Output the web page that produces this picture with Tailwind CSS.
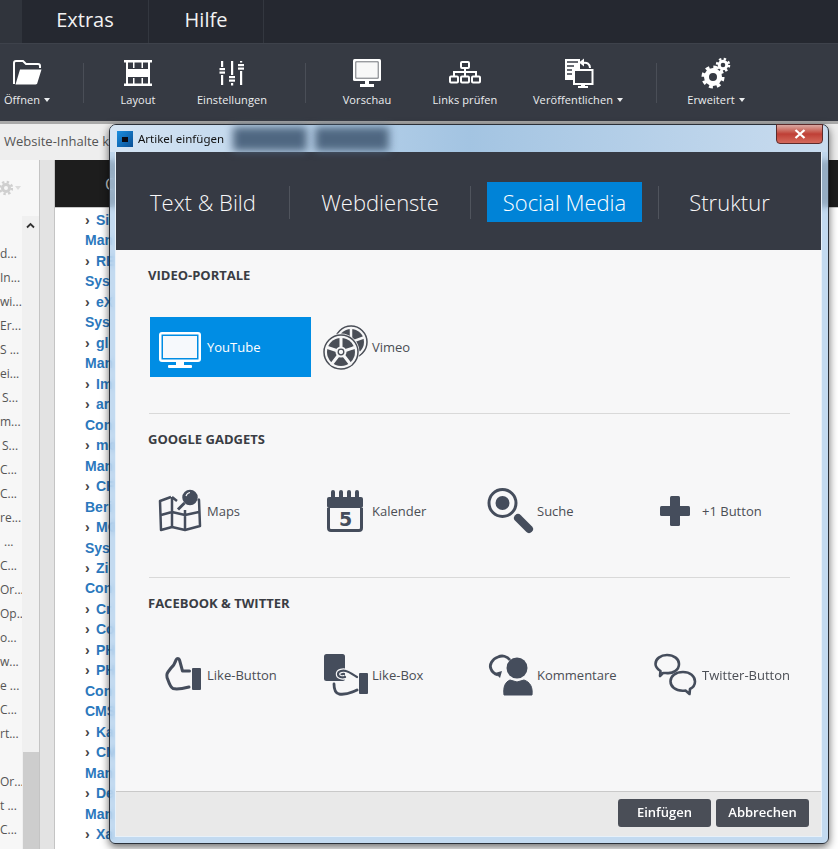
<!DOCTYPE html>
<html lang="de">
<head>
<meta charset="utf-8">
<title>Artikel einfügen</title>
<script src="https://cdn.jsdelivr.net/npm/@tailwindcss/browser@4"></script>
</head>
<body class="m-0">
<div class="relative w-[838px] h-[849px] overflow-hidden bg-white font-['Open_Sans',sans-serif] flex flex-col">

  <!-- menu bar -->
  <div class="h-[43px] shrink-0 flex bg-[#252830] text-[#f2f2f2] text-[20px] pb-[4px]">
    <div class="w-[22px] -mb-[4px] bg-[#30343c]"></div>
    <div class="w-[127px] -mb-[4px] pb-[4px] flex items-center justify-center border-r border-[#33373f]">Extras</div>
    <div class="w-[115px] -mb-[4px] pb-[4px] flex items-center justify-center border-r border-[#33373f]">Hilfe</div>
  </div>

  <!-- toolbar -->
  <div class="h-[78px] shrink-0 flex bg-[#363a43] text-[#eceef0] text-[11px] tracking-[0.1px] border-t border-[#3e424b]">
    <div class="w-[54px] flex flex-col items-center pt-[13px]">
      <svg width="40" height="32" viewBox="7 57 40 32" fill="none"><path d="M14 84V63a2 2 0 0 1 2-2h7l3 3h12a2 2 0 0 1 2 2v2" stroke="#fff" stroke-width="2"/><path d="M20 69.500h21.500l-4 13a2 2 0 0 1-2 2H15.500z" fill="#fff"/></svg>
      <div class="mt-[3px] h-[16px] leading-[16px] flex items-center whitespace-nowrap">Öffnen<span class="ml-[4px] w-0 h-0 border-x-[3.500px] border-t-[4px] border-x-transparent border-t-[#eceef0]"></span></div>
    </div>
    <div class="ml-[29px] mt-[19px] w-px h-[40px] bg-[#4a4e57]"></div>
    <div class="ml-[24px] w-[60px] flex flex-col items-center pt-[13px]">
      <svg width="40" height="32" viewBox="118 57 40 32" fill="#fff"><rect x="124" y="60" width="28" height="2.500"/><rect x="124" y="83.500" width="28" height="2.500"/><rect x="126" y="60" width="2" height="26"/><rect x="148" y="60" width="2" height="26"/><rect x="126" y="69" width="24" height="8"/><rect x="133" y="62" width="1.500" height="6"/><rect x="141.500" y="62" width="1.500" height="6"/><rect x="133" y="78" width="1.500" height="6"/><rect x="141.500" y="78" width="1.500" height="6"/></svg>
      <div class="mt-[3px] h-[16px] leading-[16px] whitespace-nowrap">Layout</div>
    </div>
    <div class="ml-[24px] w-[80px] flex flex-col items-center pt-[13px]">
      <svg width="40" height="32" viewBox="212 57 40 32" fill="#fff"><rect x="221" y="61" width="2.200" height="6"/><rect x="221" y="75" width="2.200" height="10"/><rect x="219.500" y="68" width="5.500" height="2.200"/><rect x="219.500" y="71.500" width="5.500" height="2.200"/><rect x="231" y="61" width="2.200" height="14"/><rect x="231" y="83" width="2.200" height="2.500"/><rect x="229" y="76" width="6" height="2.200"/><rect x="229" y="79.500" width="6" height="2.200"/><rect x="240" y="61" width="2.200" height="1.500"/><rect x="240" y="71" width="2.200" height="14"/><rect x="238" y="64" width="6" height="2.200"/><rect x="238" y="67.500" width="6" height="2.200"/></svg>
      <div class="mt-[3px] h-[16px] leading-[16px] whitespace-nowrap">Einstellungen</div>
    </div>
    <div class="ml-[33px] mt-[19px] w-px h-[40px] bg-[#4a4e57]"></div>
    <div class="ml-[31px] w-[60px] flex flex-col items-center pt-[13px]">
      <svg width="40" height="32" viewBox="347 57 40 32"><rect x="353" y="59" width="28" height="22" rx="1.500" fill="#fff"/><rect x="355.500" y="61.500" width="23" height="17" fill="#363a43"/><rect x="356.200" y="62.200" width="21.600" height="15.600" fill="#f8f8f8"/><rect x="365" y="81" width="4" height="3" fill="#fff"/><rect x="360" y="84" width="14" height="3" fill="#fff"/></svg>
      <div class="mt-[3px] h-[16px] leading-[16px] whitespace-nowrap">Vorschau</div>
    </div>
    <div class="ml-[28px] w-[80px] flex flex-col items-center pt-[13px]">
      <svg width="40" height="32" viewBox="445 57 40 32" fill="none" stroke="#fff" stroke-width="2"><rect x="461" y="62" width="8" height="6" rx="1"/><path d="M465 68v4M454 76v-4h22v4M465 72v4"/><rect x="450" y="76.500" width="8" height="6" rx="1"/><rect x="461" y="76.500" width="8" height="6" rx="1"/><rect x="472" y="76.500" width="8" height="6" rx="1"/></svg>
      <div class="mt-[3px] h-[16px] leading-[16px] whitespace-nowrap">Links prüfen</div>
    </div>
    <div class="ml-[23px] w-[100px] flex flex-col items-center pt-[13px]">
      <svg width="40" height="32" viewBox="558 57 40 32"><path d="M565 59h15v21h-15z" fill="#fff"/><path d="M567 62h11M567 66h7M567 70h5M567 74h5" stroke="#363a43" stroke-width="1.500"/><path d="M590 68c0-4-3-6-7-5" fill="none" stroke="#fff" stroke-width="2"/><path d="M579 62.500l5-4v8z" fill="#fff"/><rect x="574" y="70" width="18.500" height="14" fill="#363a43" stroke="#fff" stroke-width="2"/><rect x="581" y="84" width="4" height="2" fill="#fff"/><rect x="578" y="86" width="10" height="2" fill="#fff"/></svg>
      <div class="mt-[3px] h-[16px] leading-[16px] flex items-center whitespace-nowrap">Veröffentlichen<span class="ml-[4px] w-0 h-0 border-x-[3.500px] border-t-[4px] border-x-transparent border-t-[#eceef0]"></span></div>
    </div>
    <div class="ml-[28px] mt-[19px] w-px h-[40px] bg-[#4a4e57]"></div>
    <div class="ml-[19px] w-[80px] flex flex-col items-center pt-[13px]">
      <svg width="40" height="32" viewBox="696 57 40 32" fill="none" stroke="#fff"><circle cx="713" cy="77" r="6.500" stroke-width="5"/><circle cx="713" cy="77" r="9.800" stroke-width="3.500" stroke-dasharray="3.850 3.850"/><circle cx="723" cy="65" r="3.800" stroke-width="3"/><circle cx="723" cy="65" r="6" stroke-width="2.500" stroke-dasharray="2.360 2.350"/></svg>
      <div class="mt-[3px] h-[16px] leading-[16px] flex items-center whitespace-nowrap">Erweitert<span class="ml-[4px] w-0 h-0 border-x-[3.500px] border-t-[4px] border-x-transparent border-t-[#eceef0]"></span></div>
    </div>
  </div>

  <!-- breadcrumb -->
  <div class="h-[39px] shrink-0 border-t-[3px] border-[#a9a9a9] bg-[#eeeeee] pl-[4px] flex items-center text-[13px] text-[#555]">Website-Inhalte k</div>

  <!-- page behind the dialog -->
  <div class="flex-1 flex min-h-0">
    <div class="w-[39px] bg-[#f7f7f7] flex flex-col text-[12px] text-[#555] overflow-hidden">
      <div class="h-[56px] shrink-0 flex items-start pt-[20px]">
        <svg width="15" height="16" viewBox="0 0 15 16" fill="none" stroke="#cfcfcf" class="-ml-[2px]"><circle cx="8" cy="8" r="3.500" stroke-width="3"/><circle cx="8" cy="8" r="6" stroke-width="2.500" stroke-dasharray="2.360 2.350"/></svg>
        <span class="ml-[2px] mt-[6px] w-0 h-0 border-x-[3.500px] border-t-[4px] border-x-transparent border-t-[#dcdcdc]"></span>
      </div>
      <div class="flex-1 flex min-h-0">
        <div class="w-[22px] pt-[26px] leading-[24px] whitespace-nowrap">
          <div>d...</div><div>In...</div><div>wi...</div><div>Er...</div><div>S ...</div><div>ei...</div><div class="pl-[2px]">S...</div><div>m...</div><div class="pl-[2px]">S...</div><div>C...</div><div>C...</div><div>re...</div><div class="pl-[4px]">...</div><div>C...</div><div>Or...</div><div>Op...</div><div>o...</div><div>w...</div><div>e ...</div><div>C...</div><div>rt...</div><div>&nbsp;</div><div>Or...</div><div>t ...</div><div>C...</div>
        </div>
        <div class="w-[17px] bg-[#f0f0f0] flex flex-col">
          <svg width="17" height="20" viewBox="0 0 17 20" fill="none" stroke="#333" stroke-width="1.800"><path d="M5 11.500l3.500-3.500 3.500 3.500"/></svg>
          <div class="mt-[516px] flex-1 bg-[#cdcdcd] ml-px"></div>
        </div>
      </div>
    </div>
    <div class="w-[16px] bg-[#e3e3e3] border-x border-[#c4c4c4]"></div>
    <div class="flex-1 flex flex-col min-w-0">
      <div class="h-[48px] shrink-0 bg-[#1d1d1d] border-b border-[#c8c8c8] pl-[50px] flex items-center text-[16px] text-[#ccc]">C</div>
      <div class="pl-[30px] pt-[2px] font-['Liberation_Sans',sans-serif] font-bold text-[14px] leading-[20.470px] text-[#2b78bd] whitespace-nowrap">
        <div><span class="inline-block w-[11px] text-[#444]">›</span>Si</div><div>Man</div>
        <div><span class="inline-block w-[11px] text-[#444]">›</span>RE</div><div>Sys</div>
        <div><span class="inline-block w-[11px] text-[#444]">›</span>eX</div><div>Sys</div>
        <div><span class="inline-block w-[11px] text-[#444]">›</span>gl</div><div>Man</div>
        <div><span class="inline-block w-[11px] text-[#444]">›</span>Im</div>
        <div><span class="inline-block w-[11px] text-[#444]">›</span>ar</div><div>Con</div>
        <div><span class="inline-block w-[11px] text-[#444]">›</span>mo</div><div>Man</div>
        <div><span class="inline-block w-[11px] text-[#444]">›</span>CF</div><div>Beri</div>
        <div><span class="inline-block w-[11px] text-[#444]">›</span>MO</div><div>Sys</div>
        <div><span class="inline-block w-[11px] text-[#444]">›</span>Zi</div><div>Con</div>
        <div><span class="inline-block w-[11px] text-[#444]">›</span>Cr</div>
        <div><span class="inline-block w-[11px] text-[#444]">›</span>Co</div>
        <div><span class="inline-block w-[11px] text-[#444]">›</span>PH</div>
        <div><span class="inline-block w-[11px] text-[#444]">›</span>PH</div><div>Con</div><div>CMS</div>
        <div><span class="inline-block w-[11px] text-[#444]">›</span>Ka</div>
        <div><span class="inline-block w-[11px] text-[#444]">›</span>CM</div><div>Man</div>
        <div><span class="inline-block w-[11px] text-[#444]">›</span>De</div><div>Man</div>
        <div><span class="inline-block w-[11px] text-[#444]">›</span>Xa</div>
      </div>
    </div>
  </div>

  <!-- dialog window -->
  <div class="absolute left-[109px] top-[124px] w-[720px] h-[720px] rounded-t-[7px] rounded-b-[6px] border border-[#2b3038] shadow-[0_3px_8px_rgba(0,0,0,0.6)] bg-[#b4d1ec]/80 backdrop-blur-[3px] flex flex-col pl-[6px] pr-[7px] pb-[7px]">
    <!-- title bar -->
    <div class="relative h-[27px] shrink-0 -mx-[6px] px-[7px] rounded-t-[6px] bg-gradient-to-r from-[#d6e5f4] via-[#a3c4e2] to-[#c9dcef] flex items-center text-[11.500px] text-[#111]">
      <div class="absolute left-[123px] top-[2px] w-[74px] h-[24px] bg-[#4f6781] blur-[4px]"></div>
      <div class="absolute left-[205px] top-[2px] w-[74px] h-[24px] bg-[#4f6781] blur-[4px]"></div>
      <div class="relative w-[16px] h-[16px] mt-[1px] bg-gradient-to-br from-[#1b8fe0] to-[#0b4f95] flex items-center justify-center"><div class="w-[6px] h-[5px] bg-[#0a0a12]"></div></div>
      <div class="relative ml-[5px] font-['Noto_Sans',sans-serif] whitespace-nowrap">Artikel einfügen</div>
      <div class="absolute left-[666px] -top-px w-[47px] h-[20px] rounded-b-[4px] border border-[#5c2b2b] bg-gradient-to-b from-[#d9a8a2] via-[#bf3f36] to-[#d4695c] flex items-center justify-center">
        <svg width="14" height="10" viewBox="0 0 14 10" fill="none" stroke="#fff" stroke-width="2.300"><path d="M2.500 1l9 8M11.500 1l-9 8"/></svg>
      </div>
    </div>

    <div class="flex-1 min-h-0 flex flex-col bg-[#f7f7f8] outline outline-1 outline-[#e8f1f9]">
      <!-- tabs -->
      <div class="h-[98px] shrink-0 bg-[#363a44] pt-[2px] pl-px flex items-center text-[22px] text-[#f8f8f9] font-light">
        <div class="w-[173px] h-[33px] flex items-center justify-center border-r border-[#50545d]">Text &amp; Bild</div>
        <div class="w-[181px] h-[33px] flex items-center justify-center border-r border-[#50545d]">Webdienste</div>
        <div class="w-[188px] h-[33px] flex items-center justify-center border-r border-[#50545d]">
          <div class="w-[155px] h-[40px] shrink-0 bg-[#0083d7] flex items-center justify-center text-white">Social Media</div>
        </div>
        <div class="w-[141px] flex items-center justify-center">Struktur</div>
      </div>

      <!-- content -->
      <div class="flex-1 min-h-0 pl-[32px] text-[13px] text-[#4b4e55]">
        <div class="pt-[16px] h-[34px] leading-[18px] font-bold text-[13px] text-[#3a3d44]">VIDEO-PORTALE</div>
        <div class="mt-[33px] ml-[2px] flex gap-[4px] [&_span]:mt-[2px]">
          <div class="w-[161px] h-[60px] flex items-center bg-[#008de4] text-white">
            <svg width="57" height="60" viewBox="150 317 57 60"><rect x="159" y="332" width="42" height="30" rx="3" fill="#fff"/><rect x="161.500" y="334.500" width="37" height="25" fill="#008de4"/><rect x="163" y="336" width="34" height="22" fill="#f6f9fc"/><rect x="176" y="362" width="8" height="3" fill="#fff"/><rect x="168" y="365" width="24" height="3" rx="1" fill="#fff"/></svg>
            <span>YouTube</span>
          </div>
          <div class="w-[161px] h-[60px] flex items-center">
            <svg width="57" height="60" viewBox="315 317 57 60">
              <circle cx="351" cy="342" r="16" fill="none" stroke="#4a4e57" stroke-width="1.500"/>
              <circle cx="351" cy="342" r="13" fill="#4a4e57"/>
              <path d="M351 342L351 327M351 342L365 337M351 342L360 354" stroke="#f7f7f8" stroke-width="2.500"/>
              <circle cx="341" cy="352" r="18.500" fill="#f7f7f8"/>
              <circle cx="341" cy="352" r="17" fill="none" stroke="#4a4e57" stroke-width="1.500"/>
              <circle cx="341" cy="352" r="14" fill="#4a4e57"/>
              <path d="M341 352V336M341 352L356 347M341 352L351 365M341 352L331 365M341 352L326 347" stroke="#f7f7f8" stroke-width="3"/>
              <circle cx="341" cy="352" r="5.500" fill="#f7f7f8"/>
              <circle cx="341" cy="352" r="2.800" fill="none" stroke="#4a4e57" stroke-width="1.300"/>
            </svg>
            <span>Vimeo</span>
          </div>
        </div>
        <div class="mt-[36px] ml-px w-[641px] h-px bg-[#d9d9d9]"></div>

        <div class="pt-[16px] h-[34px] leading-[18px] font-bold text-[13px] text-[#3a3d44]">GOOGLE GADGETS</div>
        <div class="mt-[33px] ml-[2px] flex gap-[4px] [&_span]:mt-[2px]">
          <div class="w-[161px] h-[60px] flex items-center">
            <svg width="57" height="60" viewBox="150 481 57 60" fill="none" stroke="#454d5c" stroke-width="2.500" stroke-linejoin="round">
              <path d="M171 497l-11 4 1 29 11-3 13 3 15-4-1-26-1-1"/><path d="M172 497l5 4M172 497v30M185 510v20M161 515l11-3 13 3 14-3"/>
              <circle cx="190" cy="497.500" r="6.500" fill="#454d5c"/><path d="M186 496a5 5 0 0 1 4-3.500" stroke="#f7f7f8" stroke-width="1.200"/><path d="M184.500 503l-6.500 6.500" stroke-width="3"/>
            </svg>
            <span>Maps</span>
          </div>
          <div class="w-[161px] h-[60px] flex items-center">
            <svg width="57" height="60" viewBox="315 481 57 60">
              <rect x="327" y="497" width="36" height="11" rx="2" fill="#454d5c"/>
              <rect x="331" y="490" width="4" height="11" rx="2" fill="#454d5c"/><rect x="339" y="490" width="4" height="11" rx="2" fill="#454d5c"/><rect x="347" y="490" width="4" height="11" rx="2" fill="#454d5c"/><rect x="355" y="490" width="4" height="11" rx="2" fill="#454d5c"/>
              <path d="M328.500 508v20a2.500 2.500 0 0 0 2.500 2.500h28a2.500 2.500 0 0 0 2.500-2.500v-20" fill="none" stroke="#454d5c" stroke-width="3"/>
              <text x="345.500" y="526" text-anchor="middle" font-family="DejaVu Sans" font-weight="700" font-size="19" fill="#454d5c">5</text>
            </svg>
            <span>Kalender</span>
          </div>
          <div class="w-[161px] h-[60px] flex items-center">
            <svg width="57" height="60" viewBox="480 481 57 60" fill="none" stroke="#454d5c">
              <circle cx="502.500" cy="503" r="13.500" stroke-width="3"/><circle cx="502.500" cy="503" r="7" fill="#454d5c" stroke="none"/>
              <path d="M518 518l11 11" stroke-width="8" stroke-linecap="round"/>
            </svg>
            <span>Suche</span>
          </div>
          <div class="w-[161px] h-[60px] flex items-center">
            <svg width="57" height="60" viewBox="645 481 57 60" fill="#454d5c"><rect x="670" y="496" width="10" height="30" rx="1.500"/><rect x="660" y="506" width="30" height="10" rx="1.500"/></svg>
            <span>+1 Button</span>
          </div>
        </div>
        <div class="mt-[36px] ml-px w-[641px] h-px bg-[#d9d9d9]"></div>

        <div class="pt-[16px] h-[34px] leading-[18px] font-bold text-[13px] text-[#3a3d44]">FACEBOOK &amp; TWITTER</div>
        <div class="mt-[33px] ml-[2px] flex gap-[4px] [&_span]:mt-[2px]">
          <div class="w-[161px] h-[60px] flex items-center">
            <svg width="57" height="60" viewBox="150 645 57 60">
              <rect x="192" y="668" width="9" height="22" rx="1" fill="#454d5c"/>
              <path d="M189.500 671h-7l-3-11c-.5-2-2.500-2-3.500 0-1 3-2.500 6-5 8l-3 4c-1.500 2-1.500 5 0 8 1 3 2.500 7 5 8.500 4 1 10 0 16-1.500" fill="none" stroke="#454d5c" stroke-width="3" stroke-linecap="round" stroke-linejoin="round"/>
            </svg>
            <span>Like-Button</span>
          </div>
          <div class="w-[161px] h-[60px] flex items-center">
            <svg width="57" height="60" viewBox="315 645 57 60" fill="none">
              <rect x="324" y="654" width="21" height="27" rx="2.500" fill="#454d5c"/>
              <rect x="359" y="673" width="9" height="21" rx="1" fill="#454d5c"/>
              <path d="M357 677c-4-2-7-5-11-6-3-1-8 0-8 3s4 4 7 3" stroke="#f7f7f8" stroke-width="4.500"/>
              <path d="M357 677c-4-2-7-5-11-6-3-1-8 0-8 3s4 4 7 3" stroke="#454d5c" stroke-width="2.200" stroke-linecap="round"/>
              <path d="M334 684c0 5 1 9 5 10 6 1 12-1 18-4" stroke="#454d5c" stroke-width="2.800" stroke-linecap="round"/>
            </svg>
            <span>Like-Box</span>
          </div>
          <div class="w-[161px] h-[60px] flex items-center">
            <svg width="57" height="60" viewBox="480 645 57 60" fill="none">
              <path d="M510 660c-3-4-8-5-12-3-6 2-9 8-7 12 1 3 4 5 7 6" stroke="#454d5c" stroke-width="2.800"/>
              <path d="M495 673l7-2-2 7z" fill="#454d5c"/>
              <circle cx="517" cy="668" r="10.500" fill="#454d5c"/>
              <path d="M504 695c-1-8 1-13 6-15l7 2 7-2c6 2 9 7 8 15z" fill="#454d5c" stroke="#454d5c" stroke-linejoin="round"/>
            </svg>
            <span>Kommentare</span>
          </div>
          <div class="w-[161px] h-[60px] flex items-center">
            <svg width="57" height="60" viewBox="645 645 57 60" fill="none" stroke="#454d5c" stroke-width="2.600" stroke-linejoin="round">
              <path d="M667 655c7 0 12 4 12 9 0 6-6 10-13 9-1 0-2 0-3 0l-3 3 .5-5c-3-2-5-4-5-7 0-5 5-9 11.500-9z"/>
              <path d="M683 672c7 0 12 4 12 9.500 0 3-2 6-5 7.500l-.5 5-4-3.500c-1 .2-2 .2-3 .2-7 0-12-4-12-9.500 0-5 5-9.200 12.500-9.200z"/>
            </svg>
            <span>Twitter-Button</span>
          </div>
        </div>
      </div>

      <!-- footer -->
      <div class="h-[45px] shrink-0 border-t border-[#c9c9c9] bg-[#e9e9e9] pt-[7px] pr-[12px] flex justify-end gap-[5px]">
        <div class="w-[93px] h-[28px] rounded-[3px] bg-[#4a4e57] text-white text-[13px] font-semibold flex items-center justify-center">Einfügen</div>
        <div class="w-[93px] h-[28px] rounded-[3px] bg-[#4a4e57] text-white text-[13px] font-semibold flex items-center justify-center">Abbrechen</div>
      </div>
    </div>
  </div>
</div>
</body>
</html>
